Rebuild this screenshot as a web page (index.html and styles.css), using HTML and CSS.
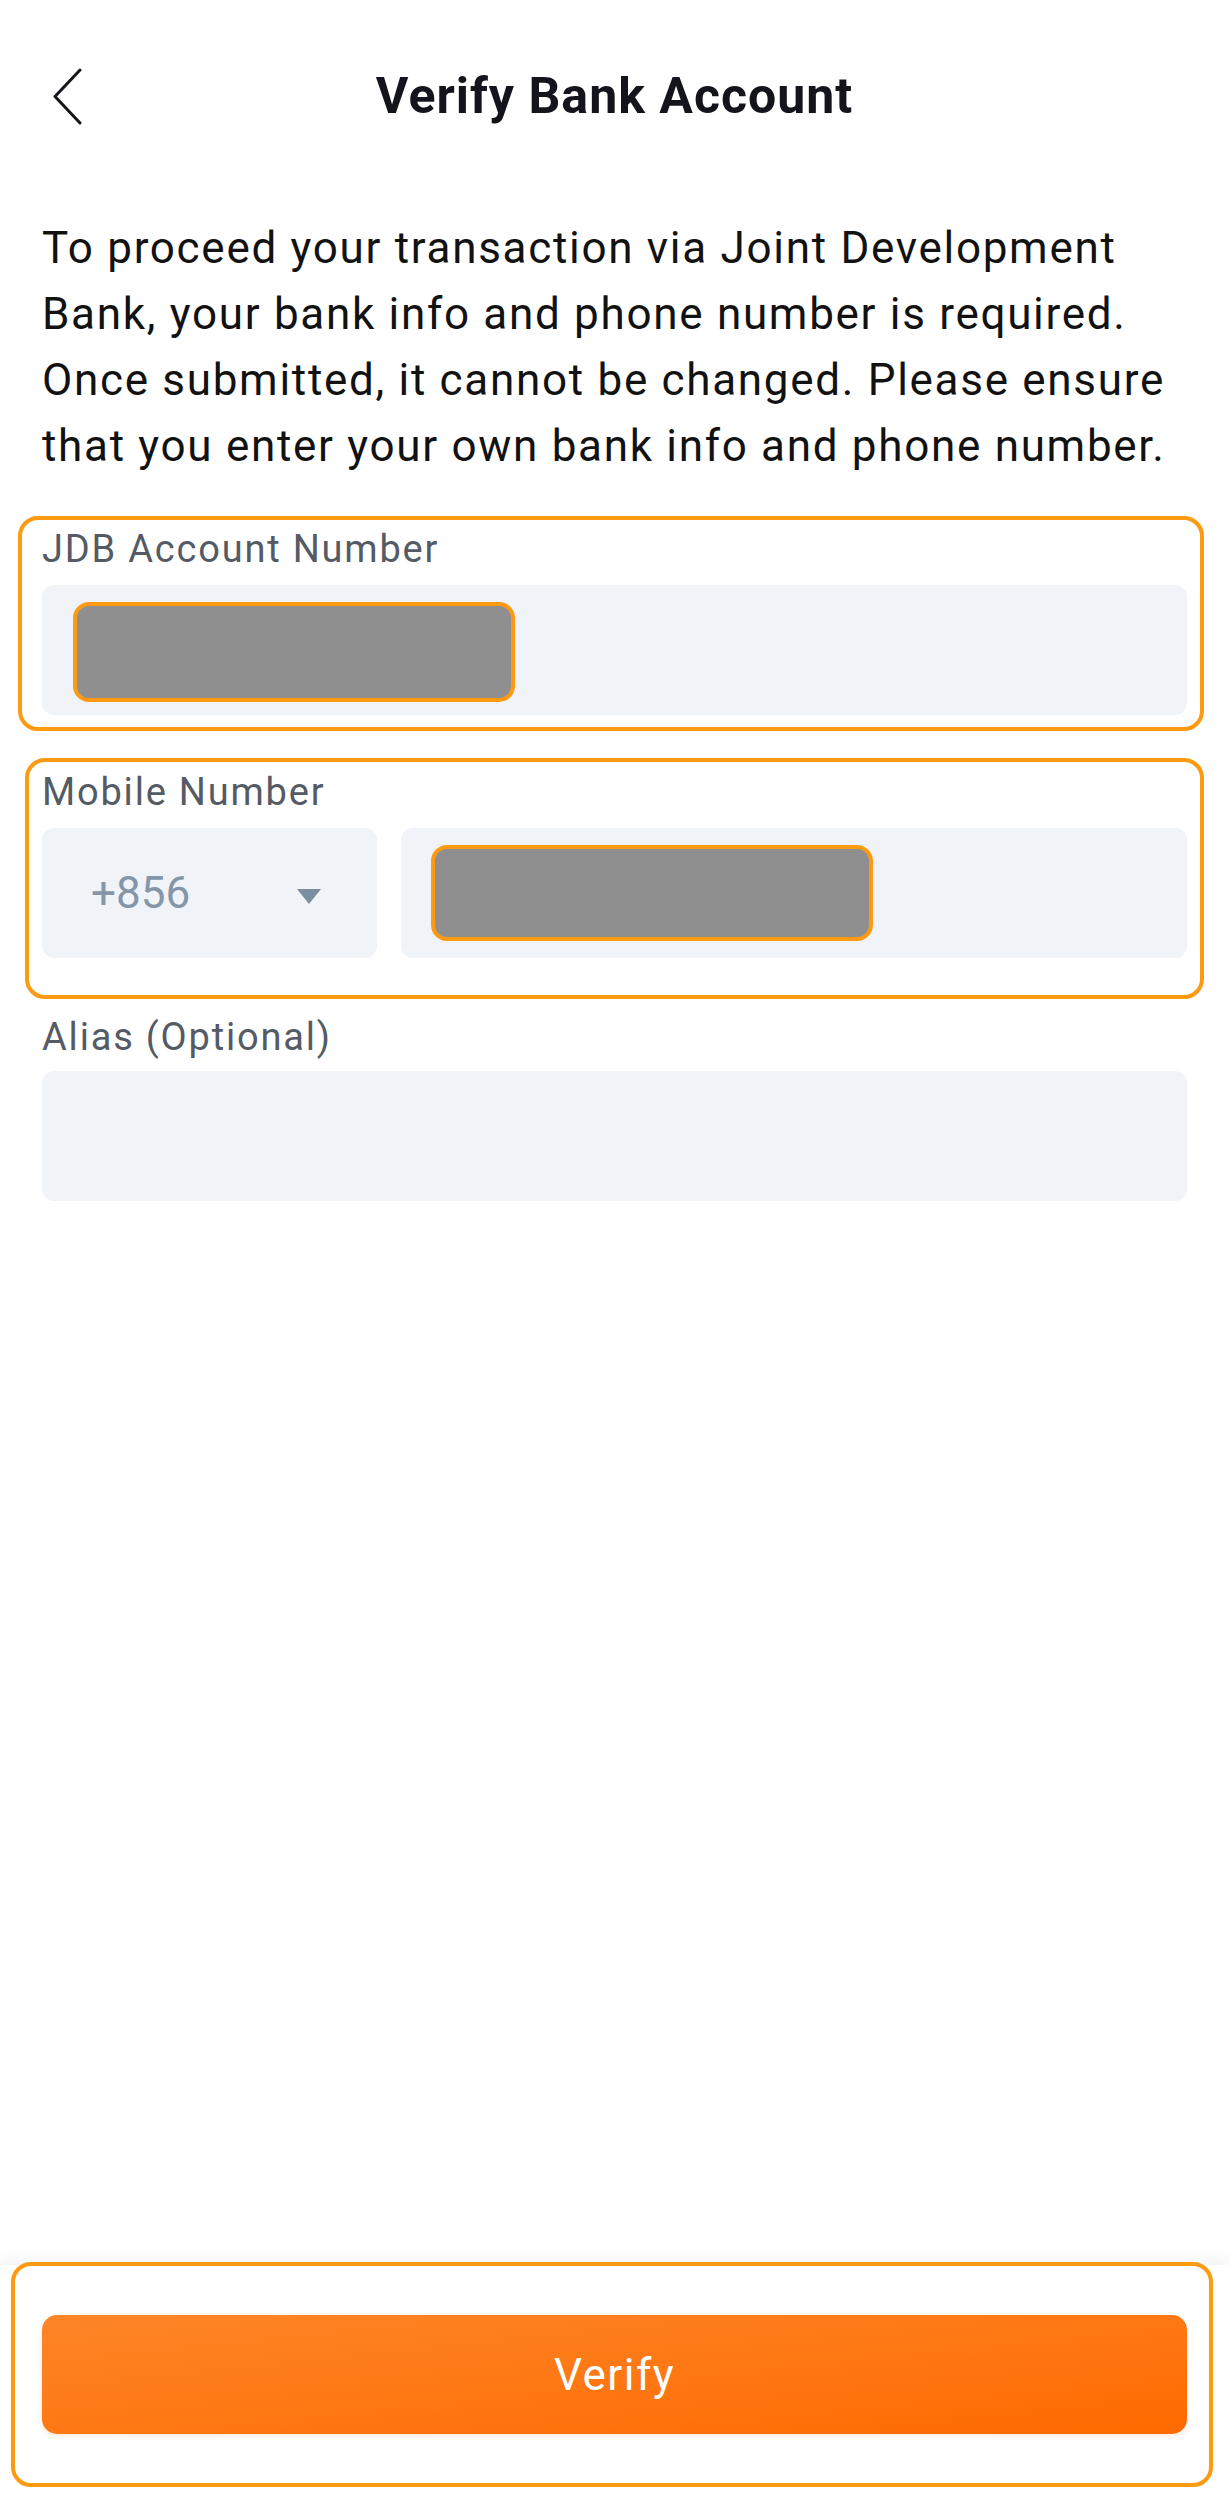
FILE: index.html
```html
<!DOCTYPE html>
<html lang="en">
<head>
    <meta charset="UTF-8">
    <meta name="viewport" content="width=device-width, initial-scale=1.0">
    <title>Verify Bank Account</title>
    <link rel="stylesheet" href="styles.css">
</head>
<body>
    <div class="page">
        <div class="topbar">
            <button class="back" aria-label="Back">
                <svg width="30" height="57" viewBox="0 0 30 57">
                    <polyline points="27,2 2,28.5 27,55" fill="none" stroke="#15151c" stroke-width="3" stroke-linecap="round" stroke-linejoin="round"/>
                </svg>
            </button>
            <h1>Verify Bank Account</h1>
        </div>

        <div class="content">
            <p class="intro">To proceed your transaction via Joint Development Bank, your bank info and phone number is required. Once submitted, it cannot be changed. Please ensure that you enter your own bank info and phone number.</p>

            <div class="field marked marked-account">
                <label class="field-label">JDB Account Number</label>
                <div class="input">
                    <span class="masked masked-account"></span>
                </div>
            </div>

            <div class="field marked marked-mobile">
                <label class="field-label">Mobile Number</label>
                <div class="phone-row">
                    <div class="input country">
                        <span class="code">+856</span>
                        <span class="caret"></span>
                    </div>
                    <div class="input phone">
                        <span class="masked masked-phone"></span>
                    </div>
                </div>
            </div>

            <div class="field field-alias">
                <label class="field-label">Alias (Optional)</label>
                <div class="input"></div>
            </div>
        </div>

        <div class="bottom-bar">
            <div class="marked marked-action">
                <button class="verify">Verify</button>
            </div>
        </div>
    </div>
</body>
</html>
```

FILE: styles.css
```css
body {
    margin: 0;
    font-family: Roboto, 'Noto Sans', sans-serif;
    background-color: #ffffff;
    color: #121212;
}
.page {
    min-height: 100vh;
    display: flex;
    flex-direction: column;
}
.topbar {
    height: 192px;
    display: flex;
    align-items: center;
    justify-content: center;
    position: relative;
}
.back {
    position: absolute;
    left: 53px;
    top: 68px;
    padding: 0;
    border: none;
    background: none;
    display: flex;
}
h1 {
    margin: 0;
    font-size: 50px;
    font-weight: bold;
    color: #14141d;
    letter-spacing: 1px;
}
.content {
    flex: 1;
    padding: 0 42px;
}
.intro {
    margin: 23px 0 37px;
    font-size: 44px;
    line-height: 66px;
    color: #121212;
    letter-spacing: 1.7px;
}
.field-label {
    display: block;
    font-size: 38px;
    line-height: 48px;
    color: #545b64;
    letter-spacing: 1.8px;
    margin-bottom: 12px;
}
.input {
    height: 130px;
    background-color: #f0f3f8;
    border-radius: 12px;
    display: flex;
    align-items: center;
    box-sizing: border-box;
}
.marked {
    border: 4px solid #fd9a12;
    border-radius: 20px;
}
.marked-account {
    margin: 0 -17px 0 -24px;
    padding: 5px 13px 12px 20px;
}
.marked-mobile {
    margin: 27px -17px 0 -17px;
    padding: 6px 13px 37px 13px;
}
.field-alias {
    margin-top: 14px;
}
.field-alias .field-label {
    margin-bottom: 10px;
}
.masked {
    display: block;
    height: 100px;
    width: 442px;
    box-sizing: border-box;
    background-color: #8f8f8f;
    border: 4px solid #fd9a12;
    border-radius: 16px;
}
.masked-account {
    margin-left: 31px;
    margin-top: 4px;
}
.phone-row {
    display: flex;
    gap: 24px;
}
.country {
    width: 335px;
    padding: 0 56px 0 49px;
    justify-content: space-between;
}
.code {
    font-size: 44px;
    color: #8596a9;
}
.caret {
    width: 0;
    height: 0;
    border-left: 12px solid transparent;
    border-right: 12px solid transparent;
    border-top: 15px solid #7b8da1;
    margin-top: 6px;
}
.phone {
    flex: 1;
    padding-left: 30px;
}
.masked-phone {
    height: 96px;
}
.bottom-bar {
    padding: 0 0 32px;
    background-color: #ffffff;
    box-shadow: 0 -6px 14px rgba(0, 0, 0, 0.05);
}
.marked-action {
    margin: -3px 16px 0 11px;
    padding: 49px 22px 49px 27px;
}
.verify {
    display: block;
    width: 100%;
    height: 119px;
    border: none;
    border-radius: 15px;
    background: linear-gradient(to bottom right, #fd8628, #ff6a00);
    box-shadow: 0 2px 6px rgba(255, 106, 0, 0.15);
    color: #ffffff;
    font-family: Roboto, 'Noto Sans', sans-serif;
    font-size: 44px;
    letter-spacing: 1.5px;
    cursor: pointer;
}
```
